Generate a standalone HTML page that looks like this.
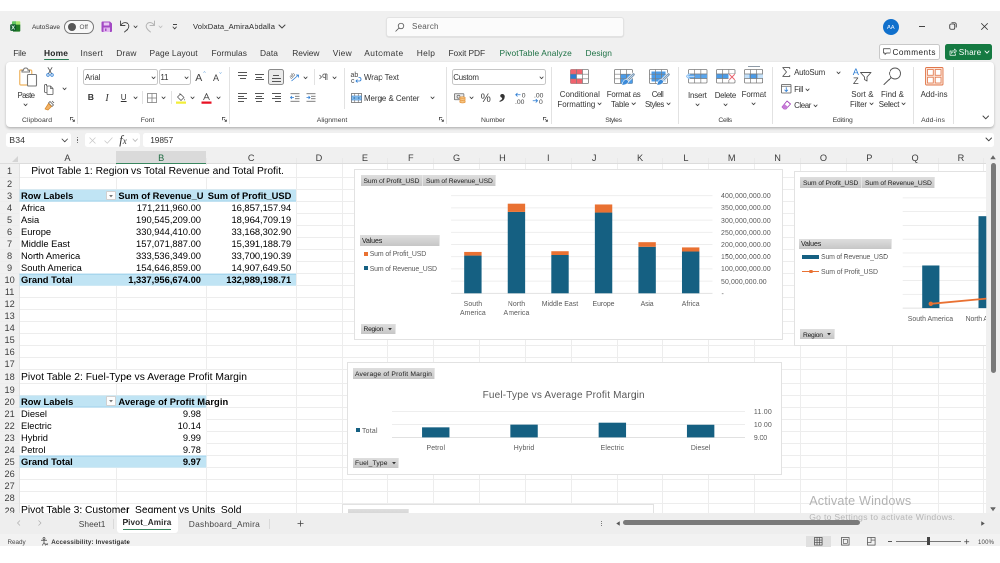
<!DOCTYPE html>
<html lang="en"><head><meta charset="utf-8"><title>VolxData_AmiraAbdalla - Excel</title>
<style>
html,body{margin:0;padding:0;background:#fff;}
body{width:1000px;height:563px;overflow:hidden;position:relative;font-family:"Liberation Sans",sans-serif;}
#vp{position:absolute;left:0;top:0;width:2000px;height:1126px;overflow:hidden;transform:scale(0.5);transform-origin:0 0;will-change:transform;background:#fff;}
#app{position:absolute;left:0;top:0;width:1000px;height:563px;overflow:hidden;background:#fff;transform:scale(2);transform-origin:0 0;filter:blur(0.3px);}
#app div{position:absolute;box-sizing:border-box;}
#app svg{position:absolute;overflow:visible;}
.t{white-space:nowrap;}
.tab{font-size:8.2px;line-height:13px;text-align:center;}
</style></head>
<body><div id="vp"><div id="app">
<div style="left:0px;top:11px;width:1000px;height:537px;background:#f0f0f0;"></div>
<svg style="left:10px;top:21px" width="10.6" height="11" viewBox="0 0 21.2 22">
<path d="M4 2 Q4 0.4 5.6 0.4 H12 V8 H4 Z" fill="#5cc45c"/>
<path d="M12 0.4 H19 Q20.6 0.4 20.6 2 V8 H12 Z" fill="#a6e46f"/>
<path d="M10 7.2 H20.6 V19.4 Q20.6 21.2 18.8 21.2 H6 V7.2 Z" fill="#1d7a22"/>
<rect x="0.4" y="6.4" width="12" height="13.4" rx="2.2" fill="#0e5a2c"/>
<text x="6.4" y="17.3" text-anchor="middle" font-family="Liberation Sans, sans-serif" font-weight="700" font-size="11.5" fill="#eafff0">X</text>
</svg>
<div class="t" style="top:21.90px;font-size:6.5px;line-height:10px;color:#333;letter-spacing:-0.027px;left:32px;">AutoSave</div>
<div style="left:64px;top:19.5px;width:29.5px;height:14px;border:1px solid #777;border-radius:7px;background:#f8f8f8;"></div>
<div style="left:67.5px;top:22.5px;width:8px;height:8px;border-radius:50%;background:#555;"></div>
<div class="t" style="top:22.10px;font-size:6.4px;line-height:10px;color:#555;left:79.5px;">Off</div>
<svg style="left:101px;top:21px" width="11.5" height="11.5" viewBox="0 0 23 23">
<path d="M1 3 Q1 1 3 1 H18 L22 5 V20 Q22 22 20 22 H3 Q1 22 1 20 Z" fill="#a349c4"/>
<rect x="5.5" y="3" width="11" height="6" fill="#e9c9f3"/>
<rect x="5" y="13" width="13" height="9" fill="#e3b8f0"/>
<rect x="8" y="15" width="3" height="5" fill="#a349c4"/>
</svg>
<svg style="left:119px;top:20px" width="12" height="13" viewBox="0 0 24 26">
<path d="M3 2 V11 H12 M3.5 10.5 C7 5 14 3 18 8 C22 13 18 19 11 24" stroke="#444" stroke-width="1.8" fill="none" stroke-linecap="round" stroke-linejoin="round"/>
</svg>
<svg style="left:134.45px;top:25.65px" width="3.1" height="1.7" viewBox="0 0 3.1 1.7"><path d="M0 0 L1.55 1.7 L3.1 0" stroke="#444" stroke-width="0.9" fill="none" stroke-linecap="round" stroke-linejoin="round"/></svg>
<svg style="left:143.5px;top:20px" width="12" height="13" viewBox="0 0 24 26">
<path d="M21 2 V11 H12 M20.5 10.5 C17 5 10 3 6 8 C2 13 6 19 13 24" stroke="#b5b5b5" stroke-width="2" fill="none" stroke-linecap="round" stroke-linejoin="round"/>
</svg>
<svg style="left:159.45px;top:25.65px" width="3.1" height="1.7" viewBox="0 0 3.1 1.7"><path d="M0 0 L1.55 1.7 L3.1 0" stroke="#c0c0c0" stroke-width="0.9" fill="none" stroke-linecap="round" stroke-linejoin="round"/></svg>
<div style="left:172.6px;top:24.4px;width:4.2px;height:0.9px;background:#444;"></div>
<svg style="left:173.0px;top:26.650000000000002px" width="3.4" height="1.9" viewBox="0 0 3.4 1.9"><path d="M0 0 L1.7 1.9 L3.4 0" stroke="#444" stroke-width="0.9" fill="none" stroke-linecap="round" stroke-linejoin="round"/></svg>
<div class="t" style="top:20.90px;font-size:7.6px;line-height:12px;color:#2a2a2a;letter-spacing:0.108px;left:193px;">VolxData_AmiraAbdalla</div>
<svg style="left:278.5px;top:25.0px" width="6" height="3" viewBox="0 0 6 3"><path d="M0 0 L3.0 3 L6 0" stroke="#444" stroke-width="1" fill="none" stroke-linecap="round" stroke-linejoin="round"/></svg>
<div style="left:386px;top:17px;width:238px;height:20px;background:#fbfbfb;border:1px solid #e2e2e2;border-radius:3px;box-shadow:0 0.5px 1px rgba(0,0,0,0.12);"></div>
<svg style="left:394.5px;top:21.5px" width="10" height="10" viewBox="0 0 20 20">
<circle cx="12" cy="8" r="5.5" stroke="#555" stroke-width="1.6" fill="none"/><path d="M8 12 L1.5 18.5" stroke="#555" stroke-width="1.6" stroke-linecap="round"/></svg>
<div class="t" style="top:20.80px;font-size:8px;line-height:12px;color:#5a5a5a;letter-spacing:0.23px;left:412px;">Search</div>
<div style="left:882.8px;top:18.5px;width:16px;height:16px;border-radius:50%;background:#1070cc;"></div>
<div class="t" style="top:21.70px;font-size:5.8px;line-height:10px;color:#eaf3ff;left:880.8px;width:20px;text-align:center;">AA</div>
<div style="left:918.5px;top:25.8px;width:6.6px;height:0.8px;background:#444;"></div>
<svg style="left:949px;top:22px" width="8" height="8" viewBox="0 0 16 16"><rect x="1.5" y="4" width="10" height="10.5" rx="2.5" stroke="#333" stroke-width="1.7" fill="none"/><path d="M5 1.5 H11 Q14.5 1.5 14.5 5 V11" stroke="#333" stroke-width="1.7" fill="none"/></svg>
<svg style="left:980.5px;top:22.5px" width="7" height="7" viewBox="0 0 14 14"><path d="M1 1 L13 13 M13 1 L1 13" stroke="#333" stroke-width="1.7" stroke-linecap="round"/></svg>
<div class="t" style="top:46.70px;font-size:8.4px;line-height:13px;color:#333;letter-spacing:-0.179px;left:13.25px;">File</div>
<div class="t" style="top:46.70px;font-size:8.4px;line-height:13px;color:#222;font-weight:700;letter-spacing:0.221px;left:44px;">Home</div>
<div class="t" style="top:46.70px;font-size:8.4px;line-height:13px;color:#333;letter-spacing:0.248px;left:80.5px;">Insert</div>
<div class="t" style="top:46.70px;font-size:8.4px;line-height:13px;color:#333;letter-spacing:0.216px;left:116.25px;">Draw</div>
<div class="t" style="top:46.70px;font-size:8.4px;line-height:13px;color:#333;letter-spacing:0.108px;left:149.5px;">Page Layout</div>
<div class="t" style="top:46.70px;font-size:8.4px;line-height:13px;color:#333;letter-spacing:0.07px;left:211.5px;">Formulas</div>
<div class="t" style="top:46.70px;font-size:8.4px;line-height:13px;color:#333;letter-spacing:0.085px;left:260px;">Data</div>
<div class="t" style="top:46.70px;font-size:8.4px;line-height:13px;color:#333;letter-spacing:-0.059px;left:292.25px;">Review</div>
<div class="t" style="top:46.70px;font-size:8.4px;line-height:13px;color:#333;letter-spacing:0.315px;left:332.75px;">View</div>
<div class="t" style="top:46.70px;font-size:8.4px;line-height:13px;color:#333;letter-spacing:0.435px;left:364.25px;">Automate</div>
<div class="t" style="top:46.70px;font-size:8.4px;line-height:13px;color:#333;letter-spacing:0.325px;left:416.75px;">Help</div>
<div class="t" style="top:46.70px;font-size:8.4px;line-height:13px;color:#333;letter-spacing:-0.073px;left:448.5px;">Foxit PDF</div>
<div class="t" style="top:46.70px;font-size:8.4px;line-height:13px;color:#1e7145;letter-spacing:0.117px;left:499.5px;">PivotTable Analyze</div>
<div class="t" style="top:46.70px;font-size:8.4px;line-height:13px;color:#1e7145;letter-spacing:0.07px;left:585.5px;">Design</div>
<div style="left:44px;top:58.8px;width:24.5px;height:1.4px;background:#2a7d54;border-radius:1px;"></div>
<div style="left:879px;top:44.3px;width:61.2px;height:15.5px;background:#fff;border:0.8px solid #c8c8c8;border-radius:2.5px;"></div>
<svg style="left:883px;top:48px" width="7.5" height="7.5" viewBox="0 0 15 15"><path d="M1 1.5 H14 V10 H7 L4 13 V10 H1 Z" stroke="#333" stroke-width="1.4" fill="none" stroke-linejoin="round"/></svg>
<div class="t" style="top:46.40px;font-size:8.2px;line-height:13px;color:#222;letter-spacing:0.479px;left:892.5px;">Comments</div>
<div style="left:945.2px;top:44.3px;width:47px;height:15.5px;background:#157a42;border-radius:2.5px;"></div>
<svg style="left:948.5px;top:48px" width="8" height="8" viewBox="0 0 16 16"><path d="M5 6 H2 V14.5 H13 V11" stroke="#fff" stroke-width="1.4" fill="none" stroke-linejoin="round"/><path d="M5 11 C5 6 8 4.5 11 4.5 V2 L15 6 L11 10 V7.5 C8 7.5 6.5 8.5 5 11 Z" stroke="#fff" stroke-width="1.2" fill="none" stroke-linejoin="round"/></svg>
<div class="t" style="top:46.40px;font-size:8.2px;line-height:13px;color:#fff;letter-spacing:0.129px;left:958.8px;">Share</div>
<svg style="left:985.0px;top:51.4px" width="4" height="2.2" viewBox="0 0 4 2.2"><path d="M0 0 L2.0 2.2 L4 0" stroke="#fff" stroke-width="0.9" fill="none" stroke-linecap="round" stroke-linejoin="round"/></svg>
<div style="left:5.5px;top:61.6px;width:988.3px;height:65px;background:#fff;border-radius:4px;box-shadow:0 1.2px 2.6px rgba(0,0,0,0.24);"></div>
<svg style="left:18.5px;top:67px" width="19" height="20" viewBox="0 0 38 40">
<rect x="1.5" y="6" width="24" height="30" rx="2.5" fill="#fff" stroke="#efb45f" stroke-width="2.4"/>
<path d="M9 6.5 Q9 2 13.5 2 Q18 2 18 6.5 H21 V10 H6 V6.5 Z" fill="#fff" stroke="#777" stroke-width="2"/>
<rect x="17" y="15" width="18" height="23" rx="2" fill="#fff" stroke="#777" stroke-width="2.2"/>
</svg>
<div class="t" style="top:89.50px;font-size:7.9px;line-height:12px;color:#333;letter-spacing:-0.675px;left:17.5px;">Paste</div>
<svg style="left:24.45px;top:103.85000000000001px" width="3.1" height="1.7" viewBox="0 0 3.1 1.7"><path d="M0 0 L1.55 1.7 L3.1 0" stroke="#444" stroke-width="0.9" fill="none" stroke-linecap="round" stroke-linejoin="round"/></svg>
<svg style="left:45.5px;top:67px" width="8" height="10" viewBox="0 0 16 20">
<path d="M4 1 L11 13 M12 1 L5 13" stroke="#555" stroke-width="1.6" fill="none" stroke-linecap="round"/>
<circle cx="4" cy="16" r="2.6" stroke="#2b7cd3" stroke-width="1.6" fill="none"/><circle cx="12" cy="16" r="2.6" stroke="#2b7cd3" stroke-width="1.6" fill="none"/></svg>
<svg style="left:44px;top:83.5px" width="10" height="11" viewBox="0 0 20 22">
<path d="M5 4 V2 Q5 1 6 1 H3 Q1 1 1 3 V15 Q1 17 3 17 H5" stroke="#555" stroke-width="1.6" fill="none"/>
<path d="M6 4 H13 L18 9 V20 Q18 21 17 21 H7 Q6 21 6 20 Z" stroke="#555" stroke-width="1.6" fill="#fff" stroke-linejoin="round"/>
<path d="M13 4 V9 H18" stroke="#555" stroke-width="1.4" fill="none"/></svg>
<svg style="left:62.95px;top:88.15px" width="3.1" height="1.7" viewBox="0 0 3.1 1.7"><path d="M0 0 L1.55 1.7 L3.1 0" stroke="#444" stroke-width="0.9" fill="none" stroke-linecap="round" stroke-linejoin="round"/></svg>
<svg style="left:44px;top:100px" width="11" height="11" viewBox="0 0 22 22">
<path d="M12 3 L19 10 L16 13 L9 6 Z" fill="#fff" stroke="#555" stroke-width="1.5" stroke-linejoin="round"/>
<path d="M9 7 L15 13 L8 20 L2 18 Z" fill="#f2b266" stroke="#d98a2b" stroke-width="1.5" stroke-linejoin="round"/>
<path d="M16 2 L20 6" stroke="#555" stroke-width="1.6"/></svg>
<div class="t" style="top:114.00px;font-size:6.8px;line-height:11px;color:#3a3a3a;letter-spacing:0.112px;left:22.0px;">Clipboard</div>
<svg style="left:69.5px;top:117.3px" width="5" height="5" viewBox="0 0 10 10"><path d="M0.8 6.5 V0.8 H6.5" stroke="#444" stroke-width="1.6" fill="none"/><path d="M4 4 L8.5 8.5" stroke="#444" stroke-width="1.5" fill="none"/><path d="M9.6 4.6 V9.6 H4.6 Z" fill="#444"/></svg>
<div style="left:77.1px;top:66.5px;width:0.8px;height:57.5px;background:#e2e2e2;"></div>
<div style="left:83px;top:69.2px;width:74.5px;height:15.6px;background:#fff;border:1px solid #c6c6c6;border-radius:2.5px;"></div>
<div class="t" style="top:72.00px;font-size:7.9px;line-height:12px;color:#333;letter-spacing:-0.076px;left:85px;">Arial</div>
<svg style="left:151.64999999999998px;top:76.85000000000001px" width="3.1" height="1.7" viewBox="0 0 3.1 1.7"><path d="M0 0 L1.55 1.7 L3.1 0" stroke="#444" stroke-width="0.9" fill="none" stroke-linecap="round" stroke-linejoin="round"/></svg>
<div style="left:159px;top:69.2px;width:31.5px;height:15.6px;background:#fff;border:1px solid #c6c6c6;border-radius:2.5px;"></div>
<div class="t" style="top:71.40px;font-size:8.1px;line-height:13px;color:#333;letter-spacing:-0.3px;left:160.4px;">11</div>
<svg style="left:185.45px;top:76.85000000000001px" width="3.1" height="1.7" viewBox="0 0 3.1 1.7"><path d="M0 0 L1.55 1.7 L3.1 0" stroke="#444" stroke-width="0.9" fill="none" stroke-linecap="round" stroke-linejoin="round"/></svg>
<div class="t" style="top:69.10px;font-size:10.5px;line-height:16px;color:#444;left:195.3px;">A</div>
<svg style="left:202.5px;top:71px" width="3" height="2" viewBox="0 0 6 4"><path d="M0.8 3.5 L3 1 L5.2 3.5" stroke="#6fa8e0" stroke-width="1.1" fill="none"/></svg>
<div class="t" style="top:70.70px;font-size:9px;line-height:14px;color:#444;left:213px;">A</div>
<svg style="left:219px;top:71.5px" width="3" height="2" viewBox="0 0 6 4"><path d="M0.8 0.5 L3 3 L5.2 0.5" stroke="#6fa8e0" stroke-width="1.1" fill="none"/></svg>
<div class="t" style="top:91.40px;font-size:8.6px;line-height:13px;color:#333;font-weight:700;left:87.8px;">B</div>
<div class="t" style="top:91.80px;font-size:7.6px;line-height:12px;color:#333;left:105.4px;font-style:italic;font-family:'Liberation Serif',serif;font-size:10px;">I</div>
<div class="t" style="top:91.70px;font-size:8px;line-height:12px;color:#333;left:120.8px;text-decoration:underline;">U</div>
<svg style="left:134.45px;top:96.95px" width="3.1" height="1.7" viewBox="0 0 3.1 1.7"><path d="M0 0 L1.55 1.7 L3.1 0" stroke="#444" stroke-width="0.9" fill="none" stroke-linecap="round" stroke-linejoin="round"/></svg>
<div style="left:142.1px;top:91px;width:0.8px;height:13px;background:#e2e2e2;"></div>
<svg style="left:147px;top:92.5px" width="10" height="10" viewBox="0 0 20 20"><rect x="1" y="1" width="18" height="18" stroke="#777" stroke-width="1.5" fill="none"/><path d="M10 1 V19 M1 10 H19" stroke="#777" stroke-width="1.5"/></svg>
<svg style="left:162.45px;top:96.95px" width="3.1" height="1.7" viewBox="0 0 3.1 1.7"><path d="M0 0 L1.55 1.7 L3.1 0" stroke="#444" stroke-width="0.9" fill="none" stroke-linecap="round" stroke-linejoin="round"/></svg>
<div style="left:170.6px;top:91px;width:0.8px;height:13px;background:#e2e2e2;"></div>
<svg style="left:176px;top:92.6px" width="10" height="11" viewBox="0 0 20 22">
<path d="M9 2 L16 9 L10 15 L3 8 Z" stroke="#555" stroke-width="1.5" fill="#fff" stroke-linejoin="round"/>
<path d="M7 1 L10 4" stroke="#555" stroke-width="1.5"/>
<path d="M17 11 Q19 14 17.5 15 Q16 14 17 11 Z" fill="#555"/>
<rect x="0" y="17" width="20" height="4.5" fill="#f2ee3a"/></svg>
<svg style="left:190.64999999999998px;top:96.95px" width="3.1" height="1.7" viewBox="0 0 3.1 1.7"><path d="M0 0 L1.55 1.7 L3.1 0" stroke="#444" stroke-width="0.9" fill="none" stroke-linecap="round" stroke-linejoin="round"/></svg>
<svg style="left:201px;top:92.6px" width="11" height="11" viewBox="0 0 22 22">
<path d="M5 14 L11 1 L17 14 M7.3 9.5 H14.7" stroke="#444" stroke-width="1.7" fill="none" stroke-linejoin="round"/>
<rect x="1" y="17" width="20" height="4.5" fill="#e81123"/></svg>
<svg style="left:217.25px;top:96.95px" width="3.1" height="1.7" viewBox="0 0 3.1 1.7"><path d="M0 0 L1.55 1.7 L3.1 0" stroke="#444" stroke-width="0.9" fill="none" stroke-linecap="round" stroke-linejoin="round"/></svg>
<div class="t" style="top:114.00px;font-size:6.8px;line-height:11px;color:#3a3a3a;letter-spacing:-0.036px;left:140.75px;">Font</div>
<svg style="left:221.7px;top:117.3px" width="5" height="5" viewBox="0 0 10 10"><path d="M0.8 6.5 V0.8 H6.5" stroke="#444" stroke-width="1.6" fill="none"/><path d="M4 4 L8.5 8.5" stroke="#444" stroke-width="1.5" fill="none"/><path d="M9.6 4.6 V9.6 H4.6 Z" fill="#444"/></svg>
<div style="left:229.1px;top:66.5px;width:0.8px;height:57.5px;background:#e2e2e2;"></div>
<div style="left:238.0px;top:71.95px;width:9px;height:0.9px;background:#555;"></div><div style="left:238.0px;top:74.75px;width:9px;height:0.9px;background:#555;"></div><div style="left:239.5px;top:77.55px;width:6px;height:0.9px;background:#555;"></div>
<div style="left:254.5px;top:73.75px;width:9px;height:0.9px;background:#555;"></div><div style="left:256.0px;top:76.55px;width:6px;height:0.9px;background:#555;"></div><div style="left:254.5px;top:79.35px;width:9px;height:0.9px;background:#555;"></div>
<div style="left:268.2px;top:69.2px;width:15.4px;height:15.6px;background:#ebebeb;border:1px solid #8a8a8a;border-radius:2.5px;"></div>
<div style="left:273.2px;top:75.25px;width:6px;height:0.9px;background:#555;"></div><div style="left:271.7px;top:78.05px;width:9px;height:0.9px;background:#555;"></div><div style="left:271.7px;top:80.85px;width:9px;height:0.9px;background:#555;"></div>
<svg style="left:289px;top:70.5px" width="11" height="11" viewBox="0 0 22 22">
<text x="1" y="12" font-family="Liberation Sans, sans-serif" font-size="11" fill="#555" transform="rotate(-40 8 10)">ab</text>
<path d="M5 20 L19 8 M14 8 H19 V13" stroke="#2b7cd3" stroke-width="1.6" fill="none"/></svg>
<svg style="left:303.95px;top:76.85000000000001px" width="3.1" height="1.7" viewBox="0 0 3.1 1.7"><path d="M0 0 L1.55 1.7 L3.1 0" stroke="#444" stroke-width="0.9" fill="none" stroke-linecap="round" stroke-linejoin="round"/></svg>
<div style="left:313.6px;top:69px;width:0.8px;height:16px;background:#e2e2e2;"></div>
<svg style="left:318.5px;top:73px" width="9" height="8" viewBox="0 0 18 16">
<path d="M1 4 L5 8 L1 12" stroke="#555" stroke-width="1.5" fill="none"/>
<path d="M13 2 V14 M16 2 V14 M16 2 H11 Q7.5 2 7.5 5.5 Q7.5 9 11 9 H13" stroke="#555" stroke-width="1.5" fill="none"/></svg>
<svg style="left:333.45px;top:76.85000000000001px" width="3.1" height="1.7" viewBox="0 0 3.1 1.7"><path d="M0 0 L1.55 1.7 L3.1 0" stroke="#444" stroke-width="0.9" fill="none" stroke-linecap="round" stroke-linejoin="round"/></svg>
<div style="left:238.0px;top:93.14999999999999px;width:9px;height:0.9px;background:#555;"></div><div style="left:238.0px;top:95.75px;width:6px;height:0.9px;background:#555;"></div><div style="left:238.0px;top:98.35px;width:9px;height:0.9px;background:#555;"></div><div style="left:238.0px;top:100.95px;width:6px;height:0.9px;background:#555;"></div>
<div style="left:254.5px;top:93.14999999999999px;width:9px;height:0.9px;background:#555;"></div><div style="left:256.0px;top:95.75px;width:6px;height:0.9px;background:#555;"></div><div style="left:254.5px;top:98.35px;width:9px;height:0.9px;background:#555;"></div><div style="left:256.0px;top:100.95px;width:6px;height:0.9px;background:#555;"></div>
<div style="left:271.7px;top:93.14999999999999px;width:9px;height:0.9px;background:#555;"></div><div style="left:274.7px;top:95.75px;width:6px;height:0.9px;background:#555;"></div><div style="left:271.7px;top:98.35px;width:9px;height:0.9px;background:#555;"></div><div style="left:274.7px;top:100.95px;width:6px;height:0.9px;background:#555;"></div>
<svg style="left:289.5px;top:93.0px" width="10" height="9" viewBox="0 0 20 18">
<path d="M1 1.5 H19 M10 6.5 H19 M10 11.5 H19 M1 16.5 H19" stroke="#555" stroke-width="1.6"/>
<path d="M8 9 H1 M4 6 L1 9 L4 12" stroke="#2b7cd3" stroke-width="1.5" fill="none"/></svg>
<svg style="left:306px;top:93.0px" width="10" height="9" viewBox="0 0 20 18">
<path d="M1 1.5 H19 M10 6.5 H19 M10 11.5 H19 M1 16.5 H19" stroke="#555" stroke-width="1.6"/>
<path d="M1 9 H8 M5 6 L8 9 L5 12" stroke="#2b7cd3" stroke-width="1.5" fill="none"/></svg>
<div style="left:344.1px;top:67.5px;width:0.8px;height:41.2px;background:#e2e2e2;"></div>
<svg style="left:351px;top:71.5px" width="11" height="12" viewBox="0 0 22 24">
<text x="-1" y="10" font-family="Liberation Sans, sans-serif" font-size="14" fill="#444">ab</text>
<text x="0" y="22" font-family="Liberation Sans, sans-serif" font-size="14" fill="#444">c</text>
<path d="M15 11 H17 Q20 11 20 14.5 Q20 18 17 18 H10 M13 15 L10 18 L13 21" stroke="#2b7cd3" stroke-width="1.7" fill="none"/></svg>
<div class="t" style="top:72.10px;font-size:7.9px;line-height:12px;color:#333;letter-spacing:-0.034px;left:364px;">Wrap Text</div>
<svg style="left:350.5px;top:92.5px" width="11" height="10" viewBox="0 0 22 20">
<rect x="1" y="1" width="20" height="18" stroke="#666" stroke-width="1.5" fill="#fff"/>
<rect x="1.8" y="6" width="18.4" height="8" fill="#9fd0f5" stroke="#2b7cd3" stroke-width="1.2"/>
<path d="M7.5 1 V6 M14.5 1 V6 M7.5 14 V19 M14.5 14 V19" stroke="#666" stroke-width="1.2"/>
<path d="M5 10 H17 M7 8 L5 10 L7 12 M15 8 L17 10 L15 12" stroke="#1b5fa8" stroke-width="1.1" fill="none"/></svg>
<div class="t" style="top:92.50px;font-size:7.9px;line-height:12px;color:#333;letter-spacing:-0.02px;left:364px;">Merge &amp; Center</div>
<svg style="left:431.45px;top:97.15px" width="3.1" height="1.7" viewBox="0 0 3.1 1.7"><path d="M0 0 L1.55 1.7 L3.1 0" stroke="#444" stroke-width="0.9" fill="none" stroke-linecap="round" stroke-linejoin="round"/></svg>
<div class="t" style="top:114.00px;font-size:6.8px;line-height:11px;color:#3a3a3a;letter-spacing:0.033px;left:316.75px;">Alignment</div>
<svg style="left:438.7px;top:117.3px" width="5" height="5" viewBox="0 0 10 10"><path d="M0.8 6.5 V0.8 H6.5" stroke="#444" stroke-width="1.6" fill="none"/><path d="M4 4 L8.5 8.5" stroke="#444" stroke-width="1.5" fill="none"/><path d="M9.6 4.6 V9.6 H4.6 Z" fill="#444"/></svg>
<div style="left:445.6px;top:66.5px;width:0.8px;height:57.5px;background:#e2e2e2;"></div>
<div style="left:451.5px;top:69.2px;width:94.2px;height:15.6px;background:#fff;border:1px solid #c6c6c6;border-radius:2.5px;"></div>
<div class="t" style="top:72.00px;font-size:7.9px;line-height:12px;color:#333;letter-spacing:-0.304px;left:453.3px;">Custom</div>
<svg style="left:539.6500000000001px;top:76.85000000000001px" width="3.1" height="1.7" viewBox="0 0 3.1 1.7"><path d="M0 0 L1.55 1.7 L3.1 0" stroke="#444" stroke-width="0.9" fill="none" stroke-linecap="round" stroke-linejoin="round"/></svg>
<svg style="left:453.6px;top:93.4px" width="12" height="10.5" viewBox="0 0 24 21">
<rect x="0.8" y="1.5" width="19" height="12" rx="1" fill="#e9e9e9" stroke="#666" stroke-width="1.5"/>
<circle cx="9" cy="7.5" r="3" fill="none" stroke="#666" stroke-width="1.4"/>
<ellipse cx="17" cy="10" rx="5.6" ry="2.3" fill="#f7c98a" stroke="#e0892b" stroke-width="1.2"/>
<ellipse cx="17" cy="13.8" rx="5.6" ry="2.3" fill="#f7c98a" stroke="#e0892b" stroke-width="1.2"/>
<ellipse cx="17" cy="17.6" rx="5.6" ry="2.3" fill="#f7c98a" stroke="#e0892b" stroke-width="1.2"/></svg>
<svg style="left:469.95px;top:96.95px" width="3.1" height="1.7" viewBox="0 0 3.1 1.7"><path d="M0 0 L1.55 1.7 L3.1 0" stroke="#444" stroke-width="0.9" fill="none" stroke-linecap="round" stroke-linejoin="round"/></svg>
<div class="t" style="top:89.60px;font-size:11.5px;line-height:17px;color:#444;left:480.6px;">%</div>
<div class="t" style="top:72.10px;font-size:26px;line-height:36px;color:#333;font-weight:700;left:499.2px;font-family:'Liberation Serif',serif;">,</div>
<svg style="left:515px;top:92px" width="12" height="12" viewBox="0 0 24 24">
<path d="M11 5.5 H1.5 M5 2 L1.5 5.5 L5 9" stroke="#2b7cd3" stroke-width="1.7" fill="none"/>
<text x="13.5" y="10.5" font-family="Liberation Sans, sans-serif" font-size="13.5" fill="#444">0</text>
<text x="0" y="23.5" font-family="Liberation Sans, sans-serif" font-size="13.5" fill="#444">.00</text></svg>
<svg style="left:531.5px;top:92px" width="12" height="12" viewBox="0 0 24 24">
<text x="4" y="10.5" font-family="Liberation Sans, sans-serif" font-size="13.5" fill="#444">.00</text>
<path d="M1.5 17.5 H11 M7.5 14 L11 17.5 L7.5 21" stroke="#2b7cd3" stroke-width="1.7" fill="none"/>
<text x="14" y="23.5" font-family="Liberation Sans, sans-serif" font-size="13.5" fill="#444">0</text></svg>
<div class="t" style="top:114.00px;font-size:6.8px;line-height:11px;color:#3a3a3a;letter-spacing:-0.037px;left:481.0px;">Number</div>
<svg style="left:542.7px;top:117.3px" width="5" height="5" viewBox="0 0 10 10"><path d="M0.8 6.5 V0.8 H6.5" stroke="#444" stroke-width="1.6" fill="none"/><path d="M4 4 L8.5 8.5" stroke="#444" stroke-width="1.5" fill="none"/><path d="M9.6 4.6 V9.6 H4.6 Z" fill="#444"/></svg>
<div style="left:550.6px;top:66.5px;width:0.8px;height:57.5px;background:#e2e2e2;"></div>
<svg style="left:570.2px;top:69.2px" width="19" height="15" viewBox="0 0 38 30"><rect x="1" y="1" width="36" height="28" rx="2" fill="#fff" stroke="#7a7a7a" stroke-width="1.6"/><rect x="1" y="1" width="24" height="9.3" fill="#f0636e"/><rect x="1" y="19.6" width="24" height="9.4" fill="#f0636e"/><rect x="1" y="10.3" width="12" height="9.3" fill="#2b7cd3"/><path d="M13.0 1 V29" stroke="#7a7a7a" stroke-width="1.4"/><path d="M25.0 1 V29" stroke="#7a7a7a" stroke-width="1.4"/><path d="M1 10.333333333333334 H37" stroke="#7a7a7a" stroke-width="1.4"/><path d="M1 19.666666666666668 H37" stroke="#7a7a7a" stroke-width="1.4"/></svg>
<div class="t" style="top:88.50px;font-size:7.9px;line-height:12px;color:#333;letter-spacing:0.067px;left:559.7px;">Conditional</div>
<div class="t" style="top:98.80px;font-size:7.9px;line-height:12px;color:#333;letter-spacing:0.016px;left:557.4px;">Formatting</div>
<svg style="left:597.85px;top:103.35000000000001px" width="3.1" height="1.7" viewBox="0 0 3.1 1.7"><path d="M0 0 L1.55 1.7 L3.1 0" stroke="#444" stroke-width="0.9" fill="none" stroke-linecap="round" stroke-linejoin="round"/></svg>
<svg style="left:614px;top:69.2px" width="19" height="15" viewBox="0 0 38 30"><rect x="1" y="1" width="36" height="28" rx="2" fill="#fff" stroke="#7a7a7a" stroke-width="1.6"/><rect x="13" y="10.3" width="24" height="18.7" fill="#4a9be8"/><path d="M13.0 1 V29" stroke="#7a7a7a" stroke-width="1.4"/><path d="M25.0 1 V29" stroke="#7a7a7a" stroke-width="1.4"/><path d="M1 10.333333333333334 H37" stroke="#7a7a7a" stroke-width="1.4"/><path d="M1 19.666666666666668 H37" stroke="#7a7a7a" stroke-width="1.4"/></svg>
<svg style="left:620.5px;top:72.5px" width="14" height="13" viewBox="0 0 28 26"><path d="M13 15 L25 3" stroke="#fff" stroke-width="8" stroke-linecap="round"/><path d="M13 15 L25 3" stroke="#5d7f9f" stroke-width="4.8" stroke-linecap="round"/><path d="M13.5 14.5 L24.5 3.5" stroke="#c9dcee" stroke-width="2.2" stroke-linecap="round"/><path d="M11.5 12.5 Q4 12.5 1.5 24.5 Q13 24.5 15.5 16.5 Z" fill="#3b8ad8" stroke="#fff" stroke-width="1.2"/></svg>
<div class="t" style="top:88.50px;font-size:7.9px;line-height:12px;color:#333;letter-spacing:-0.195px;left:606.8px;">Format as</div>
<div class="t" style="top:98.80px;font-size:7.9px;line-height:12px;color:#333;letter-spacing:-0.147px;left:611px;">Table</div>
<svg style="left:631.75px;top:103.35000000000001px" width="3.1" height="1.7" viewBox="0 0 3.1 1.7"><path d="M0 0 L1.55 1.7 L3.1 0" stroke="#444" stroke-width="0.9" fill="none" stroke-linecap="round" stroke-linejoin="round"/></svg>
<svg style="left:649px;top:69.2px" width="19" height="15" viewBox="0 0 38 30"><rect x="1" y="1" width="36" height="28" rx="2" fill="#fff" stroke="#7a7a7a" stroke-width="1.6"/><rect x="5" y="5" width="28" height="20" fill="#4a9be8"/><path d="M13.0 1 V29" stroke="#7a7a7a" stroke-width="1.4"/><path d="M25.0 1 V29" stroke="#7a7a7a" stroke-width="1.4"/><path d="M1 10.333333333333334 H37" stroke="#7a7a7a" stroke-width="1.4"/><path d="M1 19.666666666666668 H37" stroke="#7a7a7a" stroke-width="1.4"/></svg>
<svg style="left:655.5px;top:72.5px" width="14" height="13" viewBox="0 0 28 26"><path d="M13 15 L25 3" stroke="#fff" stroke-width="8" stroke-linecap="round"/><path d="M13 15 L25 3" stroke="#5d7f9f" stroke-width="4.8" stroke-linecap="round"/><path d="M13.5 14.5 L24.5 3.5" stroke="#c9dcee" stroke-width="2.2" stroke-linecap="round"/><path d="M11.5 12.5 Q4 12.5 1.5 24.5 Q13 24.5 15.5 16.5 Z" fill="#3b8ad8" stroke="#fff" stroke-width="1.2"/></svg>
<div class="t" style="top:88.50px;font-size:7.9px;line-height:12px;color:#333;letter-spacing:-0.503px;left:651.7px;">Cell</div>
<div class="t" style="top:98.80px;font-size:7.9px;line-height:12px;color:#333;letter-spacing:-0.443px;left:645px;">Styles</div>
<svg style="left:667.45px;top:103.35000000000001px" width="3.1" height="1.7" viewBox="0 0 3.1 1.7"><path d="M0 0 L1.55 1.7 L3.1 0" stroke="#444" stroke-width="0.9" fill="none" stroke-linecap="round" stroke-linejoin="round"/></svg>
<div class="t" style="top:114.00px;font-size:6.8px;line-height:11px;color:#3a3a3a;letter-spacing:-0.344px;left:605.2px;">Styles</div>
<div style="left:677.9px;top:66.5px;width:0.8px;height:57.5px;background:#e2e2e2;"></div>
<svg style="left:687.8px;top:69.2px" width="19.5" height="14.5" viewBox="0 0 39.0 29.0"><rect x="1" y="1" width="37.0" height="27.0" rx="2" fill="#fff" stroke="#7a7a7a" stroke-width="1.6"/><rect x="1" y="9.6" width="37" height="9.6" fill="#5aa5ec"/><path d="M13.333333333333334 1 V28.0" stroke="#7a7a7a" stroke-width="1.4"/><path d="M25.666666666666668 1 V28.0" stroke="#7a7a7a" stroke-width="1.4"/><path d="M1 10.0 H38.0" stroke="#7a7a7a" stroke-width="1.4"/><path d="M1 19.0 H38.0" stroke="#7a7a7a" stroke-width="1.4"/></svg>
<svg style="left:686.2px;top:73.2px" width="9" height="6.6" viewBox="0 0 18 13.2"><path d="M17 6.6 H3 M7.5 1.5 L2 6.6 L7.5 11.7" stroke="#6fb1f0" stroke-width="3.6" fill="none" stroke-linejoin="round"/><path d="M17 6.6 H3 M7.5 1.5 L2 6.6 L7.5 11.7" stroke="#dcecfb" stroke-width="1.2" fill="none" stroke-linejoin="round"/></svg>
<div class="t" style="top:89.50px;font-size:7.9px;line-height:12px;color:#333;letter-spacing:-0.172px;left:688px;">Insert</div>
<svg style="left:695.6500000000001px;top:103.55000000000001px" width="3.1" height="1.7" viewBox="0 0 3.1 1.7"><path d="M0 0 L1.55 1.7 L3.1 0" stroke="#444" stroke-width="0.9" fill="none" stroke-linecap="round" stroke-linejoin="round"/></svg>
<svg style="left:716px;top:69.2px" width="19.5" height="14.5" viewBox="0 0 39.0 29.0"><rect x="1" y="1" width="37.0" height="27.0" rx="2" fill="#fff" stroke="#7a7a7a" stroke-width="1.6"/><rect x="1" y="9.6" width="25" height="9.6" fill="#4a9be8"/><path d="M13.333333333333334 1 V28.0" stroke="#7a7a7a" stroke-width="1.4"/><path d="M25.666666666666668 1 V28.0" stroke="#7a7a7a" stroke-width="1.4"/><path d="M1 10.0 H38.0" stroke="#7a7a7a" stroke-width="1.4"/><path d="M1 19.0 H38.0" stroke="#7a7a7a" stroke-width="1.4"/></svg>
<svg style="left:728.2px;top:72.6px" width="8" height="8" viewBox="0 0 16 16"><rect x="1" y="2" width="15" height="12" fill="#fff"/><path d="M2.5 2.5 L13.5 13.5 M13.5 2.5 L2.5 13.5" stroke="#e8606c" stroke-width="1.9"/></svg>
<div class="t" style="top:89.50px;font-size:7.9px;line-height:12px;color:#333;letter-spacing:-0.247px;left:714.7px;">Delete</div>
<svg style="left:723.75px;top:103.55000000000001px" width="3.1" height="1.7" viewBox="0 0 3.1 1.7"><path d="M0 0 L1.55 1.7 L3.1 0" stroke="#444" stroke-width="0.9" fill="none" stroke-linecap="round" stroke-linejoin="round"/></svg>
<div style="left:748.2px;top:66.2px;width:11.4px;height:1px;background:#8e9aa6;"></div>
<svg style="left:744.3px;top:69.2px" width="19" height="14.5" viewBox="0 0 38 29.0"><rect x="1" y="1" width="36" height="27.0" rx="2" fill="#fff" stroke="#7a7a7a" stroke-width="1.6"/><rect x="1" y="9.6" width="36" height="9.6" fill="#c5e1f9"/><rect x="11" y="9.6" width="16" height="9.6" fill="#4a9be8"/><path d="M13.0 1 V28.0" stroke="#7a7a7a" stroke-width="1.4"/><path d="M25.0 1 V28.0" stroke="#7a7a7a" stroke-width="1.4"/><path d="M1 10.0 H37" stroke="#7a7a7a" stroke-width="1.4"/><path d="M1 19.0 H37" stroke="#7a7a7a" stroke-width="1.4"/></svg>
<div class="t" style="top:88.50px;font-size:7.9px;line-height:12px;color:#333;letter-spacing:-0.084px;left:741.6px;">Format</div>
<svg style="left:751.75px;top:102.55000000000001px" width="3.1" height="1.7" viewBox="0 0 3.1 1.7"><path d="M0 0 L1.55 1.7 L3.1 0" stroke="#444" stroke-width="0.9" fill="none" stroke-linecap="round" stroke-linejoin="round"/></svg>
<div class="t" style="top:114.00px;font-size:6.8px;line-height:11px;color:#3a3a3a;letter-spacing:-0.329px;left:718.4px;">Cells</div>
<div style="left:771.6px;top:66.5px;width:0.8px;height:57.5px;background:#e2e2e2;"></div>
<svg style="left:782px;top:67.4px" width="8.5" height="10" viewBox="0 0 17 20"><path d="M15.5 4 V1.2 H1.5 L9 10 L1.5 18.8 H15.5 V16" stroke="#555" stroke-width="1.7" fill="none" stroke-linejoin="round"/></svg>
<div class="t" style="top:66.80px;font-size:7.9px;line-height:12px;color:#333;letter-spacing:-0.233px;left:794.1px;">AutoSum</div>
<svg style="left:837.45px;top:71.75px" width="3.1" height="1.7" viewBox="0 0 3.1 1.7"><path d="M0 0 L1.55 1.7 L3.1 0" stroke="#444" stroke-width="0.9" fill="none" stroke-linecap="round" stroke-linejoin="round"/></svg>
<svg style="left:780.8px;top:84.2px" width="10.5" height="9.5" viewBox="0 0 21 19"><rect x="1" y="1" width="19" height="17" rx="1" fill="#fff" stroke="#555" stroke-width="1.6"/><path d="M1 4.5 H20" stroke="#555" stroke-width="1.4"/><path d="M10.5 6.5 V14.5 M7 11.5 L10.5 15 L14 11.5" stroke="#2b7cd3" stroke-width="1.6" fill="none"/></svg>
<div class="t" style="top:83.50px;font-size:7.9px;line-height:12px;color:#333;letter-spacing:-0.297px;left:794.1px;">Fill</div>
<svg style="left:806.45px;top:88.55000000000001px" width="3.1" height="1.7" viewBox="0 0 3.1 1.7"><path d="M0 0 L1.55 1.7 L3.1 0" stroke="#444" stroke-width="0.9" fill="none" stroke-linecap="round" stroke-linejoin="round"/></svg>
<svg style="left:780.8px;top:100.3px" width="10.5" height="10" viewBox="0 0 21 20"><path d="M12 2 L19 8 L10 18 H6 L2 14 Z" fill="#fff" stroke="#a340b8" stroke-width="1.7" stroke-linejoin="round"/><path d="M7 8 L14 14 L10 18 H6 L2 14 Z" fill="#c77ad8"/></svg>
<div class="t" style="top:99.90px;font-size:7.9px;line-height:12px;color:#333;letter-spacing:-0.395px;left:794.1px;">Clear</div>
<svg style="left:814.0500000000001px;top:104.95px" width="3.1" height="1.7" viewBox="0 0 3.1 1.7"><path d="M0 0 L1.55 1.7 L3.1 0" stroke="#444" stroke-width="0.9" fill="none" stroke-linecap="round" stroke-linejoin="round"/></svg>
<svg style="left:852.8px;top:68px" width="19" height="17" viewBox="0 0 38 34">
<text x="-0.5" y="14" font-family="Liberation Sans, sans-serif" font-size="18.5" fill="#2b7cd3">A</text>
<text x="0" y="32" font-family="Liberation Sans, sans-serif" font-size="18.5" fill="#444">Z</text>
<path d="M15 9 H36 L28 18 V26 L23 23 V18 Z" fill="#fff" stroke="#555" stroke-width="1.8" stroke-linejoin="round"/></svg>
<div class="t" style="top:88.50px;font-size:7.9px;line-height:12px;color:#333;letter-spacing:0.069px;left:851.2px;">Sort &amp;</div>
<div class="t" style="top:98.80px;font-size:7.9px;line-height:12px;color:#333;letter-spacing:-0.111px;left:850px;">Filter</div>
<svg style="left:869.6500000000001px;top:103.35000000000001px" width="3.1" height="1.7" viewBox="0 0 3.1 1.7"><path d="M0 0 L1.55 1.7 L3.1 0" stroke="#444" stroke-width="0.9" fill="none" stroke-linecap="round" stroke-linejoin="round"/></svg>
<svg style="left:883.2px;top:67.4px" width="19" height="18.5" viewBox="0 0 38 37"><circle cx="24" cy="13" r="11" stroke="#555" stroke-width="1.8" fill="none"/><path d="M16 21.5 L2 35" stroke="#555" stroke-width="2" stroke-linecap="round"/></svg>
<div class="t" style="top:88.50px;font-size:7.9px;line-height:12px;color:#333;letter-spacing:0.013px;left:881px;">Find &amp;</div>
<div class="t" style="top:98.80px;font-size:7.9px;line-height:12px;color:#333;letter-spacing:-0.251px;left:878.8px;">Select</div>
<svg style="left:902.35px;top:103.35000000000001px" width="3.1" height="1.7" viewBox="0 0 3.1 1.7"><path d="M0 0 L1.55 1.7 L3.1 0" stroke="#444" stroke-width="0.9" fill="none" stroke-linecap="round" stroke-linejoin="round"/></svg>
<div class="t" style="top:114.00px;font-size:6.8px;line-height:11px;color:#3a3a3a;letter-spacing:-0.099px;left:832.6px;">Editing</div>
<div style="left:913.3000000000001px;top:66.5px;width:0.8px;height:57.5px;background:#e2e2e2;"></div>
<svg style="left:924.6px;top:66.9px" width="18.5" height="18.5" viewBox="0 0 37 37"><rect x="1" y="1" width="35" height="35" rx="2" fill="#fbe3d6" stroke="#e0764a" stroke-width="1.8"/>
<rect x="5" y="5" width="11.5" height="11.5" fill="#fff" stroke="#e0764a" stroke-width="1.6"/><rect x="20.5" y="5" width="11.5" height="11.5" fill="#fff" stroke="#e0764a" stroke-width="1.6"/>
<rect x="5" y="20.5" width="11.5" height="11.5" fill="#fff" stroke="#e0764a" stroke-width="1.6"/><rect x="20.5" y="20.5" width="11.5" height="11.5" fill="#fff" stroke="#e0764a" stroke-width="1.6"/></svg>
<div class="t" style="top:88.50px;font-size:7.9px;line-height:12px;color:#333;letter-spacing:0.035px;left:920.6px;">Add-ins</div>
<div class="t" style="top:114.00px;font-size:6.8px;line-height:11px;color:#3a3a3a;letter-spacing:0.124px;left:921.1px;">Add-ins</div>
<div style="left:952.9px;top:66.5px;width:0.8px;height:57.5px;background:#e2e2e2;"></div>
<svg style="left:982.75px;top:116.1px" width="5.5" height="2.8" viewBox="0 0 5.5 2.8"><path d="M0 0 L2.75 2.8 L5.5 0" stroke="#444" stroke-width="1" fill="none" stroke-linecap="round" stroke-linejoin="round"/></svg>
<div style="left:6px;top:133px;width:64.5px;height:14px;background:#fff;border-radius:2.5px;"></div>
<div class="t" style="top:134.00px;font-size:8.7px;line-height:13px;color:#333;letter-spacing:0.11px;left:9.3px;">B34</div>
<svg style="left:61.650000000000006px;top:139.0px" width="5.5" height="2.8" viewBox="0 0 5.5 2.8"><path d="M0 0 L2.75 2.8 L5.5 0" stroke="#444" stroke-width="0.85" fill="none" stroke-linecap="round" stroke-linejoin="round"/></svg>
<div style="left:77.3px;top:137.04999999999998px;width:1.1px;height:1.1px;background:#555;border-radius:50%;"></div>
<div style="left:77.3px;top:139.45px;width:1.1px;height:1.1px;background:#555;border-radius:50%;"></div>
<div style="left:77.3px;top:141.85px;width:1.1px;height:1.1px;background:#555;border-radius:50%;"></div>
<div style="left:85px;top:133px;width:54.5px;height:14px;background:#fff;border-radius:2.5px;"></div>
<svg style="left:89px;top:136.5px" width="7" height="7" viewBox="0 0 14 14"><path d="M1.5 1.5 L12.5 12.5 M12.5 1.5 L1.5 12.5" stroke="#c8c8c8" stroke-width="1.5" stroke-linecap="round"/></svg>
<svg style="left:103.5px;top:136.5px" width="9" height="7" viewBox="0 0 18 14"><path d="M1.5 7.5 L6.5 12.5 L16.5 1.5" stroke="#c8c8c8" stroke-width="1.5" fill="none" stroke-linecap="round" stroke-linejoin="round"/></svg>
<div class="t" style="top:130.80px;font-size:12.5px;line-height:18px;color:#333;left:119.3px;font-family:'Liberation Serif',serif;font-style:italic;"><i>f</i><span style="font-size:9px">x</span></div>
<svg style="left:133.4px;top:139.20000000000002px" width="4.4" height="2.4" viewBox="0 0 4.4 2.4"><path d="M0 0 L2.2 2.4 L4.4 0" stroke="#bbb" stroke-width="0.9" fill="none" stroke-linecap="round" stroke-linejoin="round"/></svg>
<div style="left:143.4px;top:133px;width:850.4px;height:14px;background:#fff;border-radius:2.5px;"></div>
<div class="t" style="top:134.00px;font-size:8.4px;line-height:13px;color:#333;letter-spacing:-0.09px;left:150.2px;">19857</div>
<svg style="left:986.05px;top:138.0px" width="5.5" height="2.8" viewBox="0 0 5.5 2.8"><path d="M0 0 L2.75 2.8 L5.5 0" stroke="#444" stroke-width="1" fill="none" stroke-linecap="round" stroke-linejoin="round"/></svg>
<div style="left:0px;top:150px;width:1000px;height:363.20000000000005px;background:#fff;"></div>
<div style="left:0px;top:150px;width:1000px;height:14px;background:#f0f0f0;"></div>
<div style="left:0px;top:164px;width:19px;height:349.20000000000005px;background:#f0f0f0;"></div>
<div style="left:986.3px;top:150px;width:13.700000000000045px;height:363.20000000000005px;background:#f0f0f0;"></div>
<svg style="left:12px;top:156px" width="6" height="6" viewBox="0 0 6 6"><path d="M6 0 V6 H0 Z" fill="#d4d4d4"/></svg>
<div style="left:19px;top:176.97px;width:967.3px;height:1px;background:#ededed;"></div><div style="left:0;top:176.97px;width:19px;height:1px;background:#ededed;"></div><div style="left:19px;top:189.00px;width:967.3px;height:1px;background:#ededed;"></div><div style="left:0;top:189.00px;width:19px;height:1px;background:#ededed;"></div><div style="left:19px;top:201.03px;width:967.3px;height:1px;background:#ededed;"></div><div style="left:0;top:201.03px;width:19px;height:1px;background:#ededed;"></div><div style="left:19px;top:213.06px;width:967.3px;height:1px;background:#ededed;"></div><div style="left:0;top:213.06px;width:19px;height:1px;background:#ededed;"></div><div style="left:19px;top:225.09px;width:967.3px;height:1px;background:#ededed;"></div><div style="left:0;top:225.09px;width:19px;height:1px;background:#ededed;"></div><div style="left:19px;top:237.12px;width:967.3px;height:1px;background:#ededed;"></div><div style="left:0;top:237.12px;width:19px;height:1px;background:#ededed;"></div><div style="left:19px;top:249.15px;width:967.3px;height:1px;background:#ededed;"></div><div style="left:0;top:249.15px;width:19px;height:1px;background:#ededed;"></div><div style="left:19px;top:261.18px;width:967.3px;height:1px;background:#ededed;"></div><div style="left:0;top:261.18px;width:19px;height:1px;background:#ededed;"></div><div style="left:19px;top:273.21px;width:967.3px;height:1px;background:#ededed;"></div><div style="left:0;top:273.21px;width:19px;height:1px;background:#ededed;"></div><div style="left:19px;top:285.24px;width:967.3px;height:1px;background:#ededed;"></div><div style="left:0;top:285.24px;width:19px;height:1px;background:#ededed;"></div><div style="left:19px;top:297.27px;width:967.3px;height:1px;background:#ededed;"></div><div style="left:0;top:297.27px;width:19px;height:1px;background:#ededed;"></div><div style="left:19px;top:309.30px;width:967.3px;height:1px;background:#ededed;"></div><div style="left:0;top:309.30px;width:19px;height:1px;background:#ededed;"></div><div style="left:19px;top:321.33px;width:967.3px;height:1px;background:#ededed;"></div><div style="left:0;top:321.33px;width:19px;height:1px;background:#ededed;"></div><div style="left:19px;top:333.36px;width:967.3px;height:1px;background:#ededed;"></div><div style="left:0;top:333.36px;width:19px;height:1px;background:#ededed;"></div><div style="left:19px;top:345.39px;width:967.3px;height:1px;background:#ededed;"></div><div style="left:0;top:345.39px;width:19px;height:1px;background:#ededed;"></div><div style="left:19px;top:357.42px;width:967.3px;height:1px;background:#ededed;"></div><div style="left:0;top:357.42px;width:19px;height:1px;background:#ededed;"></div><div style="left:19px;top:369.45px;width:967.3px;height:1px;background:#ededed;"></div><div style="left:0;top:369.45px;width:19px;height:1px;background:#ededed;"></div><div style="left:19px;top:382.92px;width:967.3px;height:1px;background:#ededed;"></div><div style="left:0;top:382.92px;width:19px;height:1px;background:#ededed;"></div><div style="left:19px;top:394.95px;width:967.3px;height:1px;background:#ededed;"></div><div style="left:0;top:394.95px;width:19px;height:1px;background:#ededed;"></div><div style="left:19px;top:406.98px;width:967.3px;height:1px;background:#ededed;"></div><div style="left:0;top:406.98px;width:19px;height:1px;background:#ededed;"></div><div style="left:19px;top:419.01px;width:967.3px;height:1px;background:#ededed;"></div><div style="left:0;top:419.01px;width:19px;height:1px;background:#ededed;"></div><div style="left:19px;top:431.04px;width:967.3px;height:1px;background:#ededed;"></div><div style="left:0;top:431.04px;width:19px;height:1px;background:#ededed;"></div><div style="left:19px;top:443.07px;width:967.3px;height:1px;background:#ededed;"></div><div style="left:0;top:443.07px;width:19px;height:1px;background:#ededed;"></div><div style="left:19px;top:455.10px;width:967.3px;height:1px;background:#ededed;"></div><div style="left:0;top:455.10px;width:19px;height:1px;background:#ededed;"></div><div style="left:19px;top:467.13px;width:967.3px;height:1px;background:#ededed;"></div><div style="left:0;top:467.13px;width:19px;height:1px;background:#ededed;"></div><div style="left:19px;top:479.16px;width:967.3px;height:1px;background:#ededed;"></div><div style="left:0;top:479.16px;width:19px;height:1px;background:#ededed;"></div><div style="left:19px;top:491.19px;width:967.3px;height:1px;background:#ededed;"></div><div style="left:0;top:491.19px;width:19px;height:1px;background:#ededed;"></div><div style="left:19px;top:503.22px;width:967.3px;height:1px;background:#ededed;"></div><div style="left:0;top:503.22px;width:19px;height:1px;background:#ededed;"></div><div style="left:115.50px;top:164px;width:1px;height:349.20000000000005px;background:#ededed;"></div><div style="left:115.50px;top:158px;width:1px;height:6px;background:#e9e9e9;"></div><div style="left:205.80px;top:164px;width:1px;height:349.20000000000005px;background:#ededed;"></div><div style="left:205.80px;top:158px;width:1px;height:6px;background:#e9e9e9;"></div><div style="left:295.50px;top:164px;width:1px;height:349.20000000000005px;background:#ededed;"></div><div style="left:295.50px;top:158px;width:1px;height:6px;background:#e9e9e9;"></div><div style="left:341.50px;top:164px;width:1px;height:349.20000000000005px;background:#ededed;"></div><div style="left:341.50px;top:158px;width:1px;height:6px;background:#e9e9e9;"></div><div style="left:387.35px;top:164px;width:1px;height:349.20000000000005px;background:#ededed;"></div><div style="left:387.35px;top:158px;width:1px;height:6px;background:#e9e9e9;"></div><div style="left:433.20px;top:164px;width:1px;height:349.20000000000005px;background:#ededed;"></div><div style="left:433.20px;top:158px;width:1px;height:6px;background:#e9e9e9;"></div><div style="left:479.05px;top:164px;width:1px;height:349.20000000000005px;background:#ededed;"></div><div style="left:479.05px;top:158px;width:1px;height:6px;background:#e9e9e9;"></div><div style="left:524.90px;top:164px;width:1px;height:349.20000000000005px;background:#ededed;"></div><div style="left:524.90px;top:158px;width:1px;height:6px;background:#e9e9e9;"></div><div style="left:570.75px;top:164px;width:1px;height:349.20000000000005px;background:#ededed;"></div><div style="left:570.75px;top:158px;width:1px;height:6px;background:#e9e9e9;"></div><div style="left:616.60px;top:164px;width:1px;height:349.20000000000005px;background:#ededed;"></div><div style="left:616.60px;top:158px;width:1px;height:6px;background:#e9e9e9;"></div><div style="left:662.45px;top:164px;width:1px;height:349.20000000000005px;background:#ededed;"></div><div style="left:662.45px;top:158px;width:1px;height:6px;background:#e9e9e9;"></div><div style="left:708.30px;top:164px;width:1px;height:349.20000000000005px;background:#ededed;"></div><div style="left:708.30px;top:158px;width:1px;height:6px;background:#e9e9e9;"></div><div style="left:754.15px;top:164px;width:1px;height:349.20000000000005px;background:#ededed;"></div><div style="left:754.15px;top:158px;width:1px;height:6px;background:#e9e9e9;"></div><div style="left:800.00px;top:164px;width:1px;height:349.20000000000005px;background:#ededed;"></div><div style="left:800.00px;top:158px;width:1px;height:6px;background:#e9e9e9;"></div><div style="left:845.85px;top:164px;width:1px;height:349.20000000000005px;background:#ededed;"></div><div style="left:845.85px;top:158px;width:1px;height:6px;background:#e9e9e9;"></div><div style="left:891.70px;top:164px;width:1px;height:349.20000000000005px;background:#ededed;"></div><div style="left:891.70px;top:158px;width:1px;height:6px;background:#e9e9e9;"></div><div style="left:937.55px;top:164px;width:1px;height:349.20000000000005px;background:#ededed;"></div><div style="left:937.55px;top:158px;width:1px;height:6px;background:#e9e9e9;"></div><div style="left:983.40px;top:164px;width:1px;height:349.20000000000005px;background:#ededed;"></div><div style="left:983.40px;top:158px;width:1px;height:6px;background:#e9e9e9;"></div>
<div style="left:0px;top:163.4px;width:986.3px;height:0.9px;background:#dcdcdc;"></div>
<div style="left:18.5px;top:164px;width:1px;height:349.20000000000005px;background:#e2e2e2;"></div>
<div style="left:116px;top:150.5px;width:90.3px;height:13.6px;background:#dadada;border-bottom:1.2px solid #3a8760;"></div>
<div class="t" style="top:150.90px;font-size:9.2px;line-height:14px;color:#3c3c3c;left:57.5px;width:20px;text-align:center;">A</div>
<div class="t" style="top:150.90px;font-size:9.2px;line-height:14px;color:#1e6b41;left:151.15px;width:20px;text-align:center;">B</div>
<div class="t" style="top:150.90px;font-size:9.2px;line-height:14px;color:#3c3c3c;left:241.15px;width:20px;text-align:center;">C</div>
<div class="t" style="top:150.90px;font-size:9.2px;line-height:14px;color:#3c3c3c;left:309.0px;width:20px;text-align:center;">D</div>
<div class="t" style="top:150.90px;font-size:9.2px;line-height:14px;color:#3c3c3c;left:354.925px;width:20px;text-align:center;">E</div>
<div class="t" style="top:150.90px;font-size:9.2px;line-height:14px;color:#3c3c3c;left:400.77500000000003px;width:20px;text-align:center;">F</div>
<div class="t" style="top:150.90px;font-size:9.2px;line-height:14px;color:#3c3c3c;left:446.62500000000006px;width:20px;text-align:center;">G</div>
<div class="t" style="top:150.90px;font-size:9.2px;line-height:14px;color:#3c3c3c;left:492.4750000000001px;width:20px;text-align:center;">H</div>
<div class="t" style="top:150.90px;font-size:9.2px;line-height:14px;color:#3c3c3c;left:538.325px;width:20px;text-align:center;">I</div>
<div class="t" style="top:150.90px;font-size:9.2px;line-height:14px;color:#3c3c3c;left:584.1750000000002px;width:20px;text-align:center;">J</div>
<div class="t" style="top:150.90px;font-size:9.2px;line-height:14px;color:#3c3c3c;left:630.0250000000001px;width:20px;text-align:center;">K</div>
<div class="t" style="top:150.90px;font-size:9.2px;line-height:14px;color:#3c3c3c;left:675.8750000000002px;width:20px;text-align:center;">L</div>
<div class="t" style="top:150.90px;font-size:9.2px;line-height:14px;color:#3c3c3c;left:721.7250000000001px;width:20px;text-align:center;">M</div>
<div class="t" style="top:150.90px;font-size:9.2px;line-height:14px;color:#3c3c3c;left:767.5750000000003px;width:20px;text-align:center;">N</div>
<div class="t" style="top:150.90px;font-size:9.2px;line-height:14px;color:#3c3c3c;left:813.4250000000002px;width:20px;text-align:center;">O</div>
<div class="t" style="top:150.90px;font-size:9.2px;line-height:14px;color:#3c3c3c;left:859.2750000000003px;width:20px;text-align:center;">P</div>
<div class="t" style="top:150.90px;font-size:9.2px;line-height:14px;color:#3c3c3c;left:905.1250000000002px;width:20px;text-align:center;">Q</div>
<div class="t" style="top:150.90px;font-size:9.2px;line-height:14px;color:#3c3c3c;left:950.9750000000004px;width:20px;text-align:center;">R</div>
<div class="t" style="top:164.24px;font-size:9.2px;line-height:14px;color:#3c3c3c;left:-0.40000000000000036px;width:20px;text-align:center;">1</div>
<div class="t" style="top:176.99px;font-size:9.2px;line-height:14px;color:#3c3c3c;left:-0.40000000000000036px;width:20px;text-align:center;">2</div>
<div class="t" style="top:189.01px;font-size:9.2px;line-height:14px;color:#3c3c3c;left:-0.40000000000000036px;width:20px;text-align:center;">3</div>
<div class="t" style="top:201.05px;font-size:9.2px;line-height:14px;color:#3c3c3c;left:-0.40000000000000036px;width:20px;text-align:center;">4</div>
<div class="t" style="top:213.07px;font-size:9.2px;line-height:14px;color:#3c3c3c;left:-0.40000000000000036px;width:20px;text-align:center;">5</div>
<div class="t" style="top:225.11px;font-size:9.2px;line-height:14px;color:#3c3c3c;left:-0.40000000000000036px;width:20px;text-align:center;">6</div>
<div class="t" style="top:237.13px;font-size:9.2px;line-height:14px;color:#3c3c3c;left:-0.40000000000000036px;width:20px;text-align:center;">7</div>
<div class="t" style="top:249.17px;font-size:9.2px;line-height:14px;color:#3c3c3c;left:-0.40000000000000036px;width:20px;text-align:center;">8</div>
<div class="t" style="top:261.19px;font-size:9.2px;line-height:14px;color:#3c3c3c;left:-0.40000000000000036px;width:20px;text-align:center;">9</div>
<div class="t" style="top:273.22px;font-size:9.2px;line-height:14px;color:#3c3c3c;left:-0.40000000000000036px;width:20px;text-align:center;">10</div>
<div class="t" style="top:285.25px;font-size:9.2px;line-height:14px;color:#3c3c3c;left:-0.40000000000000036px;width:20px;text-align:center;">11</div>
<div class="t" style="top:297.28px;font-size:9.2px;line-height:14px;color:#3c3c3c;left:-0.40000000000000036px;width:20px;text-align:center;">12</div>
<div class="t" style="top:309.31px;font-size:9.2px;line-height:14px;color:#3c3c3c;left:-0.40000000000000036px;width:20px;text-align:center;">13</div>
<div class="t" style="top:321.34px;font-size:9.2px;line-height:14px;color:#3c3c3c;left:-0.40000000000000036px;width:20px;text-align:center;">14</div>
<div class="t" style="top:333.37px;font-size:9.2px;line-height:14px;color:#3c3c3c;left:-0.40000000000000036px;width:20px;text-align:center;">15</div>
<div class="t" style="top:345.40px;font-size:9.2px;line-height:14px;color:#3c3c3c;left:-0.40000000000000036px;width:20px;text-align:center;">16</div>
<div class="t" style="top:357.43px;font-size:9.2px;line-height:14px;color:#3c3c3c;left:-0.40000000000000036px;width:20px;text-align:center;">17</div>
<div class="t" style="top:370.18px;font-size:9.2px;line-height:14px;color:#3c3c3c;left:-0.40000000000000036px;width:20px;text-align:center;">18</div>
<div class="t" style="top:382.93px;font-size:9.2px;line-height:14px;color:#3c3c3c;left:-0.40000000000000036px;width:20px;text-align:center;">19</div>
<div class="t" style="top:394.96px;font-size:9.2px;line-height:14px;color:#3c3c3c;left:-0.40000000000000036px;width:20px;text-align:center;">20</div>
<div class="t" style="top:406.99px;font-size:9.2px;line-height:14px;color:#3c3c3c;left:-0.40000000000000036px;width:20px;text-align:center;">21</div>
<div class="t" style="top:419.02px;font-size:9.2px;line-height:14px;color:#3c3c3c;left:-0.40000000000000036px;width:20px;text-align:center;">22</div>
<div class="t" style="top:431.05px;font-size:9.2px;line-height:14px;color:#3c3c3c;left:-0.40000000000000036px;width:20px;text-align:center;">23</div>
<div class="t" style="top:443.08px;font-size:9.2px;line-height:14px;color:#3c3c3c;left:-0.40000000000000036px;width:20px;text-align:center;">24</div>
<div class="t" style="top:455.11px;font-size:9.2px;line-height:14px;color:#3c3c3c;left:-0.40000000000000036px;width:20px;text-align:center;">25</div>
<div class="t" style="top:467.14px;font-size:9.2px;line-height:14px;color:#3c3c3c;left:-0.40000000000000036px;width:20px;text-align:center;">26</div>
<div class="t" style="top:479.17px;font-size:9.2px;line-height:14px;color:#3c3c3c;left:-0.40000000000000036px;width:20px;text-align:center;">27</div>
<div class="t" style="top:491.20px;font-size:9.2px;line-height:14px;color:#3c3c3c;left:-0.40000000000000036px;width:20px;text-align:center;">28</div>
<div class="t" style="top:503.95px;font-size:9.2px;line-height:14px;color:#3c3c3c;left:-0.40000000000000036px;width:20px;text-align:center;">29</div>
<div style="left:19.5px;top:164.5px;width:276px;height:12.469999999999999px;background:#fff;"></div>
<div class="t" style="top:162.74px;font-size:10.3px;line-height:15px;color:#000;letter-spacing:-0.005px;left:31.2px;">Pivot Table 1: Region vs Total Revenue and Total Profit.</div>
<svg style="left:0;top:0" width="1000" height="563" viewBox="0 0 1000 563"><rect x="19.50" y="189.50" width="276.50" height="96.24" fill="#fff"/><rect x="19.50" y="189.50" width="276.50" height="12.03" fill="#c0e4f4"/><rect x="19.50" y="200.73" width="276.50" height="0.80" fill="#8fc9e6"/><rect x="19.50" y="273.71" width="276.50" height="12.03" fill="#c0e4f4"/><rect x="19.50" y="273.71" width="276.50" height="0.80" fill="#8fc9e6"/><rect x="19.50" y="395.45" width="186.80" height="72.18" fill="#fff"/><rect x="19.50" y="395.45" width="186.80" height="12.03" fill="#c0e4f4"/><rect x="19.50" y="406.68" width="186.80" height="0.80" fill="#8fc9e6"/><rect x="19.50" y="455.60" width="186.80" height="12.03" fill="#c0e4f4"/><rect x="19.50" y="455.60" width="186.80" height="0.80" fill="#8fc9e6"/></svg>
<div class="t" style="top:189.11px;font-size:9.35px;line-height:14px;color:#000;font-weight:700;letter-spacing:0.049px;left:21px;">Row Labels</div>
<div style="left:106px;top:190.5px;width:9.5px;height:9.829999999999998px;background:#fdfdfd;border:0.5px solid #d0d0d0;border-radius:1px;"></div>
<svg style="left:108.8px;top:194.5px" width="4" height="2.4" viewBox="0 0 8 5"><path d="M0 0 H8 L4 5 Z" fill="#777"/></svg>
<div class="t" style="top:189.11px;font-size:9.35px;line-height:14px;color:#000;font-weight:700;left:118.4px;">Sum of Revenue_U</div>
<div class="t" style="top:189.11px;font-size:9.35px;line-height:14px;color:#000;font-weight:700;left:207.8px;">Sum of Profit_USD</div>
<div class="t" style="top:201.15px;font-size:9.35px;line-height:14px;color:#000;left:21px;">Africa</div>
<div class="t" style="top:201.15px;font-size:9.35px;line-height:14px;color:#000;right:799px;text-align:right;">171,211,960.00</div>
<div class="t" style="top:201.15px;font-size:9.35px;line-height:14px;color:#000;right:708.8px;text-align:right;">16,857,157.94</div>
<div class="t" style="top:213.17px;font-size:9.35px;line-height:14px;color:#000;left:21px;">Asia</div>
<div class="t" style="top:213.17px;font-size:9.35px;line-height:14px;color:#000;right:799px;text-align:right;">190,545,209.00</div>
<div class="t" style="top:213.17px;font-size:9.35px;line-height:14px;color:#000;right:708.8px;text-align:right;">18,964,709.19</div>
<div class="t" style="top:225.21px;font-size:9.35px;line-height:14px;color:#000;left:21px;">Europe</div>
<div class="t" style="top:225.21px;font-size:9.35px;line-height:14px;color:#000;right:799px;text-align:right;">330,944,410.00</div>
<div class="t" style="top:225.21px;font-size:9.35px;line-height:14px;color:#000;right:708.8px;text-align:right;">33,168,302.90</div>
<div class="t" style="top:237.23px;font-size:9.35px;line-height:14px;color:#000;left:21px;">Middle East</div>
<div class="t" style="top:237.23px;font-size:9.35px;line-height:14px;color:#000;right:799px;text-align:right;">157,071,887.00</div>
<div class="t" style="top:237.23px;font-size:9.35px;line-height:14px;color:#000;right:708.8px;text-align:right;">15,391,188.79</div>
<div class="t" style="top:249.27px;font-size:9.35px;line-height:14px;color:#000;left:21px;">North America</div>
<div class="t" style="top:249.27px;font-size:9.35px;line-height:14px;color:#000;right:799px;text-align:right;">333,536,349.00</div>
<div class="t" style="top:249.27px;font-size:9.35px;line-height:14px;color:#000;right:708.8px;text-align:right;">33,700,190.39</div>
<div class="t" style="top:261.30px;font-size:9.35px;line-height:14px;color:#000;left:21px;">South America</div>
<div class="t" style="top:261.30px;font-size:9.35px;line-height:14px;color:#000;right:799px;text-align:right;">154,646,859.00</div>
<div class="t" style="top:261.30px;font-size:9.35px;line-height:14px;color:#000;right:708.8px;text-align:right;">14,907,649.50</div>
<div class="t" style="top:273.32px;font-size:9.35px;line-height:14px;color:#000;font-weight:700;left:21px;">Grand Total</div>
<div class="t" style="top:273.32px;font-size:9.35px;line-height:14px;color:#000;font-weight:700;right:799px;text-align:right;">1,337,956,674.00</div>
<div class="t" style="top:273.32px;font-size:9.35px;line-height:14px;color:#000;font-weight:700;right:708.8px;text-align:right;">132,989,198.71</div>
<div style="left:19.5px;top:370.44999999999976px;width:240px;height:12.470000000000027px;background:#fff;"></div>
<div class="t" style="top:368.68px;font-size:10.3px;line-height:15px;color:#000;letter-spacing:0.017px;left:21px;">Pivot Table 2: Fuel-Type vs Average Profit Margin</div>
<div class="t" style="top:395.06px;font-size:9.35px;line-height:14px;color:#000;font-weight:700;letter-spacing:0.049px;left:21px;">Row Labels</div>
<div style="left:106px;top:396.44999999999976px;width:9.5px;height:9.829999999999998px;background:#fdfdfd;border:0.5px solid #d0d0d0;border-radius:1px;"></div>
<svg style="left:108.8px;top:400.44999999999976px" width="4" height="2.4" viewBox="0 0 8 5"><path d="M0 0 H8 L4 5 Z" fill="#777"/></svg>
<div class="t" style="top:395.06px;font-size:9.35px;line-height:14px;color:#000;font-weight:700;letter-spacing:0.072px;left:118.4px;">Average of Profit Margin</div>
<div class="t" style="top:407.09px;font-size:9.35px;line-height:14px;color:#000;left:21px;">Diesel</div>
<div class="t" style="top:407.09px;font-size:9.35px;line-height:14px;color:#000;right:799px;text-align:right;">9.98</div>
<div class="t" style="top:419.12px;font-size:9.35px;line-height:14px;color:#000;left:21px;">Electric</div>
<div class="t" style="top:419.12px;font-size:9.35px;line-height:14px;color:#000;right:799px;text-align:right;">10.14</div>
<div class="t" style="top:431.15px;font-size:9.35px;line-height:14px;color:#000;left:21px;">Hybrid</div>
<div class="t" style="top:431.15px;font-size:9.35px;line-height:14px;color:#000;right:799px;text-align:right;">9.99</div>
<div class="t" style="top:443.18px;font-size:9.35px;line-height:14px;color:#000;left:21px;">Petrol</div>
<div class="t" style="top:443.18px;font-size:9.35px;line-height:14px;color:#000;right:799px;text-align:right;">9.78</div>
<div class="t" style="top:455.21px;font-size:9.35px;line-height:14px;color:#000;font-weight:700;left:21px;">Grand Total</div>
<div class="t" style="top:455.21px;font-size:9.35px;line-height:14px;color:#000;font-weight:700;right:799px;text-align:right;">9.97</div>
<div class="t" style="top:502.45px;font-size:10.3px;line-height:15px;color:#000;letter-spacing:-0.033px;left:21px;">Pivot Table 3: Customer_Segment vs Units_Sold</div>
<div style="left:354.2px;top:169.4px;width:428.5px;height:171px;background:#fff;border:0.7px solid #e2e2e2;"></div>
<div style="left:360.9px;top:175.2px;width:61.700000000000045px;height:11.100000000000023px;background:linear-gradient(#dedede,#c6c6c6);border-right:0.5px solid #e6e6e6;"></div>
<div class="t" style="top:174.95px;font-size:6.7px;line-height:11px;color:#1a1a1a;letter-spacing:-0.037px;left:363.5px;">Sum of Profit_USD</div>
<div style="left:422.6px;top:175.2px;width:73.19999999999999px;height:11.100000000000023px;background:linear-gradient(#dedede,#c6c6c6);border-right:0.5px solid #e6e6e6;"></div>
<div class="t" style="top:174.95px;font-size:6.7px;line-height:11px;color:#1a1a1a;letter-spacing:-0.046px;left:426px;">Sum of Revenue_USD</div>
<div style="left:360.2px;top:234.9px;width:80.30000000000001px;height:11.099999999999994px;background:linear-gradient(#dedede,#c6c6c6);border-right:0.5px solid #e6e6e6;"></div>
<div class="t" style="top:234.65px;font-size:7px;line-height:11px;color:#1a1a1a;letter-spacing:-0.137px;left:362px;">Values</div>
<div style="left:363.6px;top:251.7px;width:4.2px;height:4.2px;background:#e97132;"></div>
<div class="t" style="top:248.00px;font-size:6.9px;line-height:11px;color:#595959;letter-spacing:-0.105px;left:369.7px;">Sum of Profit_USD</div>
<div style="left:363.6px;top:266.2px;width:4.2px;height:4.2px;background:#156082;"></div>
<div class="t" style="top:262.80px;font-size:6.9px;line-height:11px;color:#595959;letter-spacing:-0.141px;left:369.7px;">Sum of Revenue_USD</div>
<div style="left:360.9px;top:323.6px;width:34.700000000000045px;height:10.799999999999955px;background:linear-gradient(#dedede,#c6c6c6);border-right:0.5px solid #e6e6e6;"></div>
<div class="t" style="top:323.20px;font-size:6.7px;line-height:11px;color:#1a1a1a;letter-spacing:-0.247px;left:363.5px;">Region</div>
<svg style="left:388.0px;top:327.8px" width="4" height="2.4" viewBox="0 0 8 5"><path d="M0 0 H8 L4 5 Z" fill="#333"/></svg>
<div class="t" style="top:287.70px;font-size:6.9px;line-height:11px;color:#595959;left:721.5px;">-</div>
<div class="t" style="top:275.50px;font-size:6.9px;line-height:11px;color:#595959;letter-spacing:0.123px;left:721px;">50,000,000.00</div>
<div class="t" style="top:263.30px;font-size:6.9px;line-height:11px;color:#595959;letter-spacing:0.141px;left:721px;">100,000,000.00</div>
<div class="t" style="top:251.10px;font-size:6.9px;line-height:11px;color:#595959;letter-spacing:0.141px;left:721px;">150,000,000.00</div>
<div class="t" style="top:238.90px;font-size:6.9px;line-height:11px;color:#595959;letter-spacing:0.141px;left:721px;">200,000,000.00</div>
<div class="t" style="top:226.70px;font-size:6.9px;line-height:11px;color:#595959;letter-spacing:0.141px;left:721px;">250,000,000.00</div>
<div class="t" style="top:214.50px;font-size:6.9px;line-height:11px;color:#595959;letter-spacing:0.141px;left:721px;">300,000,000.00</div>
<div class="t" style="top:202.30px;font-size:6.9px;line-height:11px;color:#595959;letter-spacing:0.141px;left:721px;">350,000,000.00</div>
<div class="t" style="top:190.10px;font-size:6.9px;line-height:11px;color:#595959;letter-spacing:0.141px;left:721px;">400,000,000.00</div>
<div class="t" style="top:298.30px;font-size:6.9px;line-height:11px;color:#595959;letter-spacing:0.117px;left:463.63px;">South</div>
<div class="t" style="top:307.40px;font-size:6.9px;line-height:11px;color:#595959;letter-spacing:0.082px;left:459.98px;">America</div>
<div class="t" style="top:298.30px;font-size:6.9px;line-height:11px;color:#595959;letter-spacing:0.107px;left:507.7900000000001px;">North</div>
<div class="t" style="top:307.40px;font-size:6.9px;line-height:11px;color:#595959;letter-spacing:0.082px;left:503.5400000000001px;">America</div>
<div class="t" style="top:298.30px;font-size:6.9px;line-height:11px;color:#595959;letter-spacing:0.045px;left:541.75px;">Middle East</div>
<div class="t" style="top:298.30px;font-size:6.9px;line-height:11px;color:#595959;letter-spacing:-0.05px;left:592.5600000000001px;">Europe</div>
<div class="t" style="top:298.30px;font-size:6.9px;line-height:11px;color:#595959;letter-spacing:-0.141px;left:640.62px;">Asia</div>
<div class="t" style="top:298.30px;font-size:6.9px;line-height:11px;color:#595959;letter-spacing:0.032px;left:681.7800000000001px;">Africa</div>
<svg style="left:0;top:0" width="1000" height="563" viewBox="0 0 1000 563"><rect x="451.10" y="292.90" width="261.36" height="0.80" fill="#d9d9d9"/><rect x="451.10" y="280.70" width="261.36" height="0.80" fill="#e9e9e9"/><rect x="451.10" y="268.50" width="261.36" height="0.80" fill="#e9e9e9"/><rect x="451.10" y="256.30" width="261.36" height="0.80" fill="#e9e9e9"/><rect x="451.10" y="244.10" width="261.36" height="0.80" fill="#e9e9e9"/><rect x="451.10" y="231.90" width="261.36" height="0.80" fill="#e9e9e9"/><rect x="451.10" y="219.70" width="261.36" height="0.80" fill="#e9e9e9"/><rect x="451.10" y="207.50" width="261.36" height="0.80" fill="#e9e9e9"/><rect x="451.10" y="195.30" width="261.36" height="0.80" fill="#e9e9e9"/><rect x="464.18" y="255.57" width="17.40" height="37.73" fill="#156082"/><rect x="464.18" y="251.93" width="17.40" height="3.64" fill="#e97132"/><rect x="507.74" y="211.92" width="17.40" height="81.38" fill="#156082"/><rect x="507.74" y="203.69" width="17.40" height="8.22" fill="#e97132"/><rect x="551.30" y="254.97" width="17.40" height="38.33" fill="#156082"/><rect x="551.30" y="251.22" width="17.40" height="3.76" fill="#e97132"/><rect x="594.86" y="212.55" width="17.40" height="80.75" fill="#156082"/><rect x="594.86" y="204.46" width="17.40" height="8.09" fill="#e97132"/><rect x="638.42" y="246.81" width="17.40" height="46.49" fill="#156082"/><rect x="638.42" y="242.18" width="17.40" height="4.63" fill="#e97132"/><rect x="681.98" y="251.52" width="17.40" height="41.78" fill="#156082"/><rect x="681.98" y="247.41" width="17.40" height="4.11" fill="#e97132"/></svg>
<div style="left:794px;top:170.5px;width:192.29999999999995px;height:175.5px;background:#fff;border:0.7px solid #e2e2e2;border-right:none;"></div>
<svg style="left:0;top:0" width="1000" height="563" viewBox="0 0 1000 563"><rect x="902.70" y="307.70" width="83.60" height="0.80" fill="#d9d9d9"/><rect x="902.70" y="293.92" width="83.60" height="0.80" fill="#e9e9e9"/><rect x="902.70" y="280.14" width="83.60" height="0.80" fill="#e9e9e9"/><rect x="902.70" y="266.36" width="83.60" height="0.80" fill="#e9e9e9"/><rect x="902.70" y="252.58" width="83.60" height="0.80" fill="#e9e9e9"/><rect x="902.70" y="238.80" width="83.60" height="0.80" fill="#e9e9e9"/><rect x="902.70" y="225.02" width="83.60" height="0.80" fill="#e9e9e9"/><rect x="902.70" y="211.24" width="83.60" height="0.80" fill="#e9e9e9"/><rect x="902.70" y="197.46" width="83.60" height="0.80" fill="#e9e9e9"/><rect x="922.20" y="265.48" width="17.20" height="42.62" fill="#156082"/><rect x="978.50" y="216.18" width="7.80" height="91.92" fill="#156082"/></svg>
<svg style="left:0;top:0" width="1000" height="563" viewBox="0 0 1000 563"><path d="M930.8 303.8 L986.3 298.6" stroke="#e97132" stroke-width="1.8" fill="none"/><circle cx="930.8" cy="303.8" r="2.2" fill="#e97132"/></svg>
<div style="left:800.3px;top:177.1px;width:61.30000000000007px;height:10.599999999999994px;background:linear-gradient(#dedede,#c6c6c6);border-right:0.5px solid #e6e6e6;"></div>
<div class="t" style="top:176.60px;font-size:6.7px;line-height:11px;color:#1a1a1a;letter-spacing:-0.069px;left:803px;">Sum of Profit_USD</div>
<div style="left:861.6px;top:177.1px;width:73.10000000000002px;height:10.599999999999994px;background:linear-gradient(#dedede,#c6c6c6);border-right:0.5px solid #e6e6e6;"></div>
<div class="t" style="top:176.60px;font-size:6.7px;line-height:11px;color:#1a1a1a;letter-spacing:-0.046px;left:865px;">Sum of Revenue_USD</div>
<div style="left:799.1px;top:238.9px;width:92.60000000000002px;height:9.799999999999983px;background:linear-gradient(#dedede,#c6c6c6);border-right:0.5px solid #e6e6e6;"></div>
<div class="t" style="top:238.00px;font-size:7px;line-height:11px;color:#1a1a1a;letter-spacing:-0.137px;left:801px;">Values</div>
<div style="left:802.2px;top:255px;width:17.2px;height:4px;background:#156082;"></div>
<div class="t" style="top:251.30px;font-size:6.9px;line-height:11px;color:#595959;letter-spacing:-0.153px;left:821px;">Sum of Revenue_USD</div>
<div style="left:802.2px;top:270.9px;width:17.2px;height:1.6px;background:#e97132;"></div>
<div style="left:809px;top:269.9px;width:3.6px;height:3.6px;background:#e97132;border-radius:50%;"></div>
<div class="t" style="top:266.00px;font-size:6.9px;line-height:11px;color:#595959;letter-spacing:-0.08px;left:821px;">Sum of Profit_USD</div>
<div style="left:800.3px;top:329.2px;width:34.700000000000045px;height:10.199999999999989px;background:linear-gradient(#dedede,#c6c6c6);border-right:0.5px solid #e6e6e6;"></div>
<div class="t" style="top:328.50px;font-size:6.7px;line-height:11px;color:#1a1a1a;letter-spacing:-0.247px;left:803px;">Region</div>
<svg style="left:827.4px;top:333.09999999999997px" width="4" height="2.4" viewBox="0 0 8 5"><path d="M0 0 H8 L4 5 Z" fill="#333"/></svg>
<div class="t" style="top:313.30px;font-size:6.9px;line-height:11px;color:#595959;letter-spacing:0.035px;left:907.8px;">South America</div>
<div class="t" style="left:965.6px;top:313.8px;width:20.699999999999932px;overflow:hidden;font-size:6.9px;line-height:10px;letter-spacing:-0.1px;color:#595959;">North America</div>
<div style="left:346.6px;top:362.2px;width:435.3px;height:113.2px;background:#fff;border:0.7px solid #e2e2e2;"></div>
<div style="left:352.6px;top:368.4px;width:82.19999999999999px;height:10.600000000000023px;background:linear-gradient(#dedede,#c6c6c6);border-right:0.5px solid #e6e6e6;"></div>
<div class="t" style="top:367.90px;font-size:6.7px;line-height:11px;color:#1a1a1a;letter-spacing:0.212px;left:355px;">Average of Profit Margin</div>
<div class="t" style="top:387.30px;font-size:10px;line-height:15px;color:#595959;letter-spacing:0.182px;left:482.6px;">Fuel-Type vs Average Profit Margin</div>
<div class="t" style="top:431.60px;font-size:7px;line-height:11px;color:#595959;letter-spacing:-0.108px;left:753.9px;">9.00</div>
<div class="t" style="top:418.70px;font-size:7px;line-height:11px;color:#595959;letter-spacing:0.096px;left:753.9px;">10.00</div>
<div class="t" style="top:405.80px;font-size:7px;line-height:11px;color:#595959;letter-spacing:0.226px;left:753.9px;">11.00</div>
<div class="t" style="top:442.40px;font-size:6.9px;line-height:11px;color:#595959;letter-spacing:0.095px;left:426.5px;">Petrol</div>
<div class="t" style="top:442.40px;font-size:6.9px;line-height:11px;color:#595959;letter-spacing:0.112px;left:513.8px;">Hybrid</div>
<div class="t" style="top:442.40px;font-size:6.9px;line-height:11px;color:#595959;letter-spacing:0.126px;left:600.6px;">Electric</div>
<div class="t" style="top:442.40px;font-size:6.9px;line-height:11px;color:#595959;letter-spacing:0.065px;left:690.9000000000001px;">Diesel</div>
<div style="left:355.8px;top:428.4px;width:4px;height:4px;background:#156082;"></div>
<div class="t" style="top:425.30px;font-size:6.9px;line-height:11px;color:#595959;letter-spacing:0.231px;left:362px;">Total</div>
<div style="left:352.6px;top:458.1px;width:46.5px;height:10.299999999999955px;background:linear-gradient(#dedede,#c6c6c6);border-right:0.5px solid #e6e6e6;"></div>
<div class="t" style="top:457.45px;font-size:6.7px;line-height:11px;color:#1a1a1a;letter-spacing:0.152px;left:355px;">Fuel_Type</div>
<svg style="left:391.5px;top:462.05px" width="4" height="2.4" viewBox="0 0 8 5"><path d="M0 0 H8 L4 5 Z" fill="#333"/></svg>
<svg style="left:0;top:0" width="1000" height="563" viewBox="0 0 1000 563"><rect x="392.00" y="437.00" width="353.00" height="0.80" fill="#d9d9d9"/><rect x="392.00" y="424.10" width="353.00" height="0.80" fill="#e9e9e9"/><rect x="392.00" y="411.20" width="353.00" height="0.80" fill="#e9e9e9"/><rect x="422.05" y="427.34" width="27.40" height="10.06" fill="#156082"/><rect x="510.35" y="424.63" width="27.40" height="12.77" fill="#156082"/><rect x="598.65" y="422.69" width="27.40" height="14.71" fill="#156082"/><rect x="686.95" y="424.76" width="27.40" height="12.64" fill="#156082"/></svg>
<div style="left:341.7px;top:504.1px;width:312.5px;height:20px;background:#fff;border:0.7px solid #e2e2e2;"></div>
<div style="left:347.9px;top:509.4px;width:61.10000000000002px;height:12.600000000000023px;background:linear-gradient(#dedede,#c6c6c6);border-right:0.5px solid #e6e6e6;"></div>
<div class="t" style="top:509.90px;font-size:6.7px;line-height:11px;color:#1a1a1a;letter-spacing:0.001px;left:350.5px;">Sum of Units_Sold</div>
<svg style="left:990.3px;top:154.7px" width="6" height="4.5" viewBox="0 0 12 9"><path d="M6 0.5 L11.5 8.5 H0.5 Z" fill="#666"/></svg>
<div style="left:990.6px;top:162.6px;width:5.3px;height:210.4px;background:#7a7a7a;border-radius:2.6px;"></div>
<svg style="left:990.3px;top:506.7px" width="6" height="4.5" viewBox="0 0 12 9"><path d="M6 8.5 L11.5 0.5 H0.5 Z" fill="#666"/></svg>
<div class="t" style="top:492.40px;font-size:12.6px;line-height:18px;color:#b2b2b2;letter-spacing:0.171px;left:809.2px;">Activate Windows</div>
<div style="left:0px;top:513.2px;width:1000px;height:21.3px;background:#eeeeee;"></div>
<div style="left:0px;top:534.3px;width:1000px;height:12.2px;background:#f2f2f2;"></div>
<div style="left:0px;top:546.3px;width:1000px;height:17px;background:#fff;"></div>
<svg style="left:16.5px;top:520px" width="3.5" height="6" viewBox="0 0 7 12"><path d="M6 1 L1 6 L6 11" stroke="#aaa" stroke-width="1.3" fill="none"/></svg>
<svg style="left:38px;top:520px" width="3.5" height="6" viewBox="0 0 7 12"><path d="M1 1 L6 6 L1 11" stroke="#aaa" stroke-width="1.3" fill="none"/></svg>
<div class="t" style="top:517.70px;font-size:8.4px;line-height:13px;color:#444;letter-spacing:0.015px;left:78.8px;">Sheet1</div>
<div style="left:113px;top:518.5px;width:0.7px;height:10px;background:#d9d9d9;"></div>
<div style="left:117px;top:513px;width:61px;height:19.5px;background:#fff;border-radius:0 0 3px 3px;"></div>
<div class="t" style="top:516.00px;font-size:8.2px;line-height:13px;color:#2c2c2c;font-weight:600;letter-spacing:0.105px;left:122.5px;">Pivot_Amira</div>
<div style="left:122.5px;top:528.6px;width:48.9px;height:1.3px;background:#3a8760;"></div>
<div class="t" style="top:517.70px;font-size:8.4px;line-height:13px;color:#444;letter-spacing:0.25px;left:188.8px;">Dashboard_Amira</div>
<div style="left:268.7px;top:518.5px;width:0.7px;height:10px;background:#d9d9d9;"></div>
<svg style="left:296.5px;top:519.5px" width="7" height="7" viewBox="0 0 14 14"><path d="M7 1 V13 M1 7 H13" stroke="#444" stroke-width="1.6"/></svg>
<div style="left:601.1px;top:520.6999999999999px;width:1px;height:1px;background:#555;border-radius:50%;"></div>
<div style="left:601.1px;top:522.9px;width:1px;height:1px;background:#555;border-radius:50%;"></div>
<div style="left:601.1px;top:525.1px;width:1px;height:1px;background:#555;border-radius:50%;"></div>
<svg style="left:615.5px;top:520.7px" width="4" height="5" viewBox="0 0 8 10"><path d="M7.5 0.5 V9.5 L0.5 5 Z" fill="#555"/></svg>
<div style="left:623.2px;top:520.3px;width:237px;height:5px;background:#7a7a7a;border-radius:2.5px;"></div>
<svg style="left:981px;top:520.7px" width="4" height="5" viewBox="0 0 8 10"><path d="M0.5 0.5 V9.5 L7.5 5 Z" fill="#555"/></svg>
<div class="t" style="top:510.70px;font-size:8.6px;line-height:13px;color:#b6b6b6;letter-spacing:0.301px;left:809.2px;">Go to Settings to activate Windows.</div>
<div class="t" style="top:536.90px;font-size:6.3px;line-height:10px;color:#444;letter-spacing:-0.003px;left:7.5px;">Ready</div>
<svg style="left:39.5px;top:537px" width="8.5" height="9" viewBox="0 0 17 18"><circle cx="8" cy="3" r="2" fill="none" stroke="#444" stroke-width="1.4"/><path d="M2 6.5 H14 M8 6.5 V11 M8 11 L4.5 17 M8 11 L11.5 17" stroke="#444" stroke-width="1.4" fill="none"/><path d="M11 13 L16 16 M16 13 L11 16" stroke="#444" stroke-width="1.1"/></svg>
<div class="t" style="top:536.90px;font-size:6.2px;line-height:10px;color:#333;font-weight:700;letter-spacing:0.189px;left:51.2px;">Accessibility: Investigate</div>
<div style="left:806px;top:535.5px;width:25.2px;height:11.5px;background:#e0e0e0;"></div>
<svg style="left:813.7px;top:537px" width="8.6" height="8.6" viewBox="0 0 17 17"><rect x="1" y="1" width="15" height="15" fill="none" stroke="#444" stroke-width="1.4"/><path d="M6 1 V16 M11 1 V16 M1 6 H16 M1 11 H16" stroke="#444" stroke-width="1.2"/></svg>
<svg style="left:840.5px;top:537px" width="8.6" height="8.6" viewBox="0 0 17 17"><rect x="1" y="1" width="15" height="15" fill="none" stroke="#444" stroke-width="1.4"/><rect x="4.5" y="4.5" width="8" height="8" fill="none" stroke="#444" stroke-width="1.2"/></svg>
<svg style="left:866.5px;top:537px" width="8.6" height="8.6" viewBox="0 0 17 17"><rect x="1" y="1" width="15" height="15" fill="none" stroke="#444" stroke-width="1.4"/><path d="M1 11 H8 V1 M8 6 H16" stroke="#444" stroke-width="1.2" fill="none"/></svg>
<div style="left:887.8px;top:541px;width:4.4px;height:0.7px;background:#555;"></div>
<div style="left:896px;top:541px;width:65.2px;height:0.8px;background:#777;"></div>
<div style="left:927.3px;top:537.2px;width:2.4px;height:8px;background:#444;"></div>
<svg style="left:963.5px;top:538.5px" width="5.4" height="5.4" viewBox="0 0 11 11"><path d="M5.5 0.5 V10.5 M0.5 5.5 H10.5" stroke="#444" stroke-width="1.5"/></svg>
<div class="t" style="top:536.90px;font-size:6px;line-height:10px;color:#444;letter-spacing:0.218px;left:978px;">100%</div>
</div></div></body></html>
